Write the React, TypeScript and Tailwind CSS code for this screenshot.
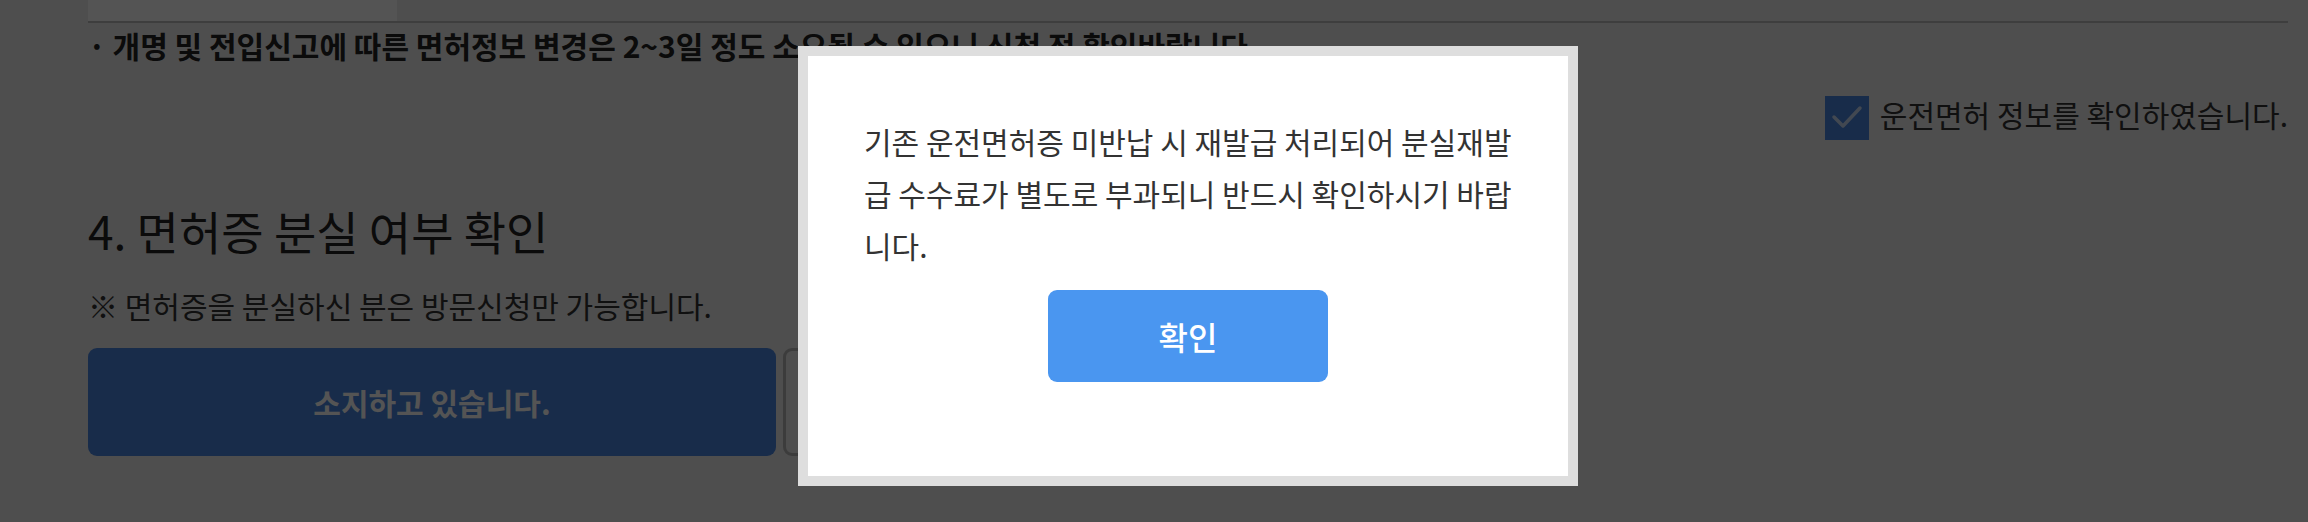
const Check = () => (
  <svg width="44" height="44" viewBox="0 0 44 44" fill="none">
    <polyline points="9,21 18,30 35,12" stroke="#ffffff" strokeWidth="3.5" strokeLinecap="round" strokeLinejoin="round" opacity="0.7" />
  </svg>
);

const App = () => {
  return (
    <div className="relative w-[2308px] h-[522px] overflow-hidden bg-[#ececec] font-['Noto_Sans_CJK_KR','Noto_Sans',sans-serif] text-[#333]">
      <div className="pl-[88px] pr-[20px]">
        <div className="flex h-[23px] border-b-2 border-[#bcbcbc]">
          <div className="w-[309px] bg-white" />
        </div>

        <p className="mt-[2px] text-[30px] leading-[40px] font-bold text-[#222]">
          · 개명 및 전입신고에 따른 면허정보 변경은 2~3일 정도 소요될 수 있으니 신청 전 확인바랍니다.
        </p>

        <div className="mt-[31px] flex items-start justify-end gap-[11px]">
          <span className="flex h-[44px] w-[44px] items-center justify-center bg-[#4985e0]">
            <Check />
          </span>
          <span className="text-[30px] leading-[36px] text-[#333]">
            운전면허 정보를 확인하였습니다.
          </span>
        </div>

        <h3 className="mt-[65px] text-[46px] leading-[50px] font-normal text-[#222]">
          4. 면허증 분실 여부 확인
        </h3>

        <p className="mt-[32px] text-[30px] leading-[36px] text-[#333]">
          ※ 면허증을 분실하신 분은 방문신청만 가능합니다.
        </p>

        <div className="mt-[25px] flex gap-[7px]">
          <button className="flex h-[108px] w-[688px] items-center justify-center rounded-[9px] bg-[#4985e0] text-[30px] font-bold text-white">
            소지하고 있습니다.
          </button>
          <button className="flex h-[108px] w-[688px] items-center justify-center rounded-[9px] border-[3px] border-[#b6b6b6] text-[30px] font-bold text-[#666]">
            분실하였습니다.
          </button>
        </div>
      </div>

      <div className="absolute inset-0 bg-black/[0.67]" />

      <div className="absolute left-[798px] top-[46px] h-[440px] w-[780px] border-[10px] border-[#dedede] bg-white">
        <div className="flex flex-col items-center px-[56px] pt-[59px]">
          <p className="w-full text-[30px] leading-[52px] text-[#333]">
            기존 운전면허증 미반납 시 재발급 처리되어 분실재발급 수수료가 별도로 부과되니 반드시 확인하시기 바랍니다.
          </p>
          <button className="mt-[19px] flex h-[92px] w-[280px] items-center justify-center rounded-[9px] bg-[#4a96f0] text-[32px] font-medium text-white">
            확인
          </button>
        </div>
      </div>
    </div>
  );
};

export default App;
